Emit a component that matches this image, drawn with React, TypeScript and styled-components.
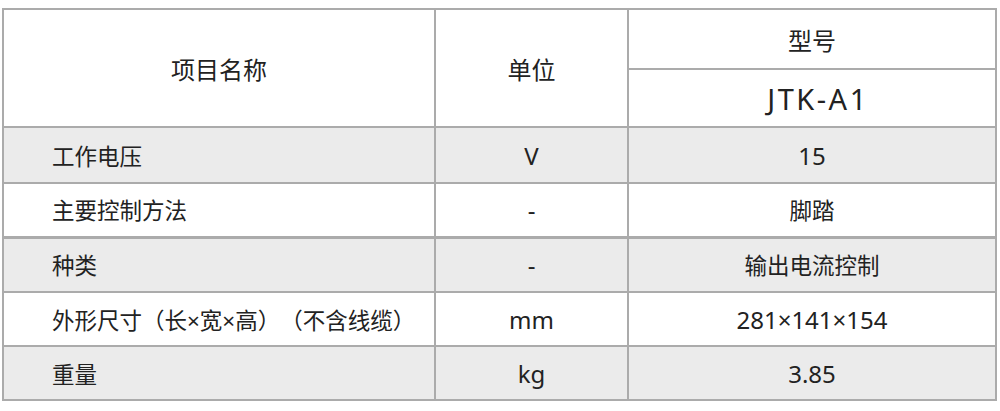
import styled, {createGlobalStyle} from "styled-components";

const GlobalStyle = createGlobalStyle`
  body {
    margin: 0;
    background: #ffffff;
    font-family: "Noto Sans", "Noto Sans CJK SC", sans-serif;
    color: #222222;
    text-spacing-trim: space-all;
  }
`

const SpecTable = styled.table`
  border-collapse: collapse;
  margin: 8px 0 0 2px;
  width: 995px;
  table-layout: fixed;

  td, th {
    border: 2px solid #ababab;
    padding: 0;
    font-weight: normal;
  }
`

const HeadCell = styled.th<{ $h?: number }>`
  height: ${(p) => p.$h ?? 58}px;
  font-size: 24px;
  text-align: center;
  vertical-align: middle;
  background: #ffffff;
`

const ModelName = styled.span`
  font-size: 29px;
  letter-spacing: 2.5px;
  padding-left: 12px;
`

const Row = styled.tr<{ $shade: boolean; $thick?: boolean; $h: number }>`
  background: ${(p) => (p.$shade ? "#ebebeb" : "#ffffff")};
  height: ${(p) => p.$h}px;

  td {
    border-top-width: ${(p) => (p.$thick ? "3px" : "2px")};
  }
`

const NameCell = styled.td`
  font-size: 22.5px;
  padding-left: 48px !important;
  text-align: left;
`

const ValueCell = styled.td<{ $latin: boolean }>`
  font-size: ${(p) => (p.$latin ? "24px" : "22.5px")};
  text-align: center;
`

const rows = [
    {name: "工作电压", unit: "V", value: "15", h: 56},
    {name: "主要控制方法", unit: "-", value: "脚踏", h: 54},
    {name: "种类", unit: "-", value: "输出电流控制", h: 55},
    {name: "外形尺寸（长×宽×高）（不含线缆）", unit: "mm", value: "281×141×154", h: 54},
    {name: "重量", unit: "kg", value: "3.85", h: 54},
];

const isLatin = (s: string) => /^[\x00-\x7f×]+$/.test(s);

function App() {
    return (
        <>
            <GlobalStyle/>
            <SpecTable>
                <colgroup>
                    <col style={{width: 432}}/>
                    <col style={{width: 193}}/>
                    <col/>
                </colgroup>
                <thead>
                <tr>
                    <HeadCell rowSpan={2}>项目名称</HeadCell>
                    <HeadCell rowSpan={2}>单位</HeadCell>
                    <HeadCell $h={58}>型号</HeadCell>
                </tr>
                <tr>
                    <HeadCell $h={56}><ModelName>JTK-A1</ModelName></HeadCell>
                </tr>
                </thead>
                <tbody>
                {rows.map((r, i) => (
                    <Row key={r.name} $shade={i % 2 === 0} $thick={i === 2} $h={r.h}>
                        <NameCell>{r.name}</NameCell>
                        <ValueCell $latin={isLatin(r.unit)}>{r.unit}</ValueCell>
                        <ValueCell $latin={isLatin(r.value)}>{r.value}</ValueCell>
                    </Row>
                ))}
                </tbody>
            </SpecTable>
        </>
    );
}

export default App;
